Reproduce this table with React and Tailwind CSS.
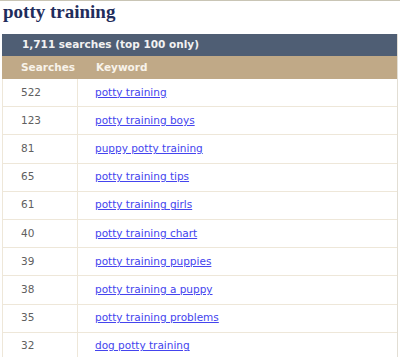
import React from "react";

const rows = [
  ["522", "potty training"],
  ["123", "potty training boys"],
  ["81", "puppy potty training"],
  ["65", "potty training tips"],
  ["61", "potty training girls"],
  ["40", "potty training chart"],
  ["39", "potty training puppies"],
  ["38", "potty training a puppy"],
  ["35", "potty training problems"],
  ["32", "dog potty training"],
];

export default function App() {
  return (
    <div className="w-[400px] h-[357px] overflow-hidden bg-white border-t border-[#c9c5b5]">
      {/* Title */}
      <h1 className="pl-[3px] pt-[1px] h-[33px] text-[19px] leading-[20px] font-bold text-[#1f2d5c] font-['Liberation_Serif',serif]">
        potty training
      </h1>

      {/* Table */}
      <div className="ml-[2px] w-[396px] border-r border-[#e2ded4] font-['DejaVu_Sans',sans-serif]">
        <div className="h-[22px] bg-[#4f5e74] pl-[20px] flex items-center text-[10.5px] font-bold text-[#f2f2f2]">
          1,711 searches (top 100 only)
        </div>
        <div className="h-[23px] bg-[#c0a987] flex items-center text-[10.5px] font-bold text-[#f8f3ea]">
          <span className="w-[76px] pl-[19px]">Searches</span>
          <span className="pl-[18px]">Keyword</span>
        </div>
        {rows.map(([n, k]) => (
          <div key={k} className="h-[28.2px] flex border-b border-l border-[#eee7d9]">
            <div className="w-[75px] pl-[18px] flex items-center text-[10.5px] text-[#606060] border-r border-[#eee7d9]">
              {n}
            </div>
            <div className="pl-[17px] flex items-center text-[10.5px]">
              <a href="#" className="text-[#4444ee] underline">
                {k}
              </a>
            </div>
          </div>
        ))}
      </div>
    </div>
  );
}
